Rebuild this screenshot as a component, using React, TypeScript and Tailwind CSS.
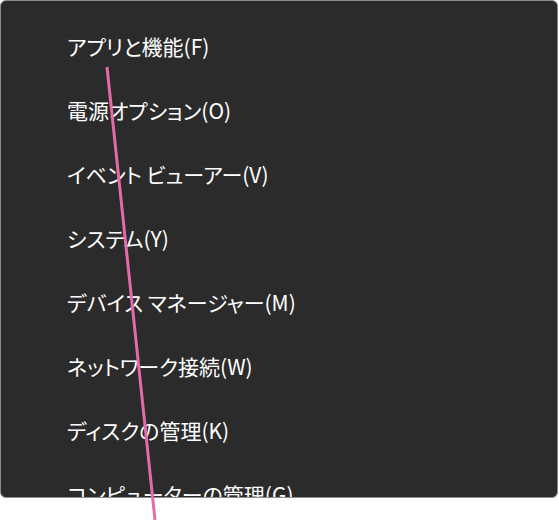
const items = [
  "アプリと機能(F)",
  "電源オプション(O)",
  "イベント ビューアー(V)",
  "システム(Y)",
  "デバイス マネージャー(M)",
  "ネットワーク接続(W)",
  "ディスクの管理(K)",
  "コンピューターの管理(G)",
];

export default function App() {
  return (
    <div className="relative h-[520px] w-[559px] bg-white">
      <div className="h-[498px] w-[558px] overflow-hidden rounded-[6px] border border-[#8c8c8c] bg-[#2b2b2b] pt-[14px]">
        {items.map((label) => (
          <div
            key={label}
            className="flex h-[64px] items-center pl-[66px] text-[21px] text-white [font-family:'Noto_Sans_CJK_JP',sans-serif] [font-feature-settings:'palt']"
          >
            {label}
          </div>
        ))}
      </div>
      <svg className="pointer-events-none absolute inset-0" width="559" height="520">
        <line x1="107" y1="67" x2="155" y2="520" stroke="#e46aa8" strokeWidth="3" />
      </svg>
    </div>
  );
}
